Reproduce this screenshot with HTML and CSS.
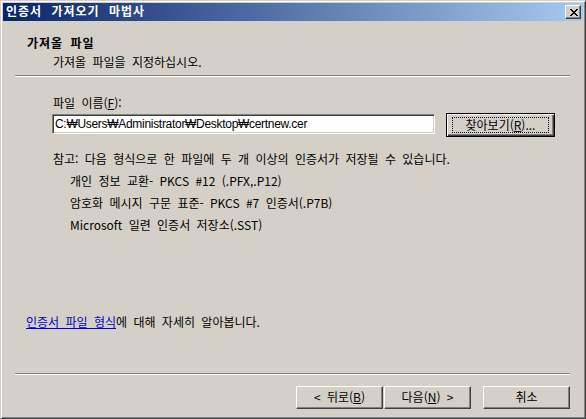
FILE: index.html
```html
<!DOCTYPE html>
<html lang="ko">
<head>
<meta charset="utf-8">
<title>인증서 가져오기 마법사</title>
<link rel="stylesheet" href="styles.css">
</head>
<body>
<div class="window">
  <div class="titlebar">
    <span class="title">인증서 가져오기 마법사</span>
    <div class="close">
      <svg width="8" height="7" viewBox="0 0 8 7" shape-rendering="crispEdges">
        <path fill="#000" d="M0 0h2v1H0zM6 0h2v1H6zM1 1h2v1H1zM5 1h2v1H5zM2 2h4v1H2zM3 3h2v1H3zM2 4h4v1H2zM1 5h2v1H1zM5 5h2v1H5zM0 6h2v1H0zM6 6h2v1H6z"/>
      </svg>
    </div>
  </div>
  <div class="page">
    <div class="header">
      <div class="h-title">가져올 파일</div>
      <div class="h-sub">가져올 파일을 지정하십시오.</div>
    </div>
    <div class="etch"></div>
    <div class="content">
      <div class="field">
        <div class="label">파일 이름(<u>F</u>):</div>
        <div class="file-row">
          <div class="input">C:₩Users₩Administrator₩Desktop₩certnew.cer</div>
          <div class="btn btn-default"><span class="focus-rect">찾아보기(<u>R</u>)...</span></div>
        </div>
        <div class="note">참고: 다음 형식으로 한 파일에 두 개 이상의 인증서가 저장될 수 있습니다.</div>
        <ul class="formats">
          <li>개인 정보 교환- PKCS #12 (.PFX,.P12)</li>
          <li>암호화 메시지 구문 표준- PKCS #7 인증서(.P7B)</li>
          <li>Microsoft 일련 인증서 저장소(.SST)</li>
        </ul>
      </div>
      <div class="more"><a class="link">인증서 파일 형식</a>에 대해 자세히 알아봅니다.</div>
    </div>
    <div class="etch"></div>
    <div class="buttons">
      <div class="btn btn-nav">&lt; 뒤로(<u>B</u>)</div>
      <div class="btn btn-nav">다음(<u>N</u>) &gt;</div>
      <div class="btn btn-nav btn-cancel">취소</div>
    </div>
  </div>
</div>
</body>
</html>
```

FILE: styles.css
```css
* { box-sizing: border-box; }

html, body {
  margin: 0;
  padding: 0;
  background: #d4d0c8;
}

body {
  font-family: "Noto Sans CJK KR", "Liberation Sans", sans-serif;
  font-size: 12px;
  line-height: 14px;
  word-spacing: 3px;
  color: #000;
}

.window {
  width: 586px;
  height: 419px;
  display: flex;
  flex-direction: column;
  background: #d4d0c8;
  border: 1px solid;
  border-color: #d4d0c8 #404040 #404040 #d4d0c8;
  box-shadow: inset 1px 1px #ffffff, inset -1px -1px #808080;
  padding: 2px;
}

.titlebar {
  height: 18px;
  flex: none;
  display: flex;
  align-items: center;
  justify-content: space-between;
  background: linear-gradient(to right, #0a246a, #a6caf0);
  padding: 0 2px 0 3px;
}

.title {
  color: #fff;
  font-weight: bold;
  letter-spacing: 1px;
  word-spacing: 5px;
  line-height: 16px;
  padding-bottom: 2px;
}

.close {
  width: 16px;
  height: 14px;
  display: flex;
  align-items: center;
  justify-content: center;
  background: #d4d0c8;
  border: 1px solid;
  border-color: #ffffff #404040 #404040 #ffffff;
  box-shadow: inset -1px -1px #808080;
  padding-left: 1px;
}

.close svg { display: block; }

.page {
  flex: 1;
  display: flex;
  flex-direction: column;
}

.header {
  padding-top: 15px;
}

.h-title {
  padding-left: 24px;
  font-weight: bold;
  letter-spacing: 1px;
}

.h-sub {
  padding-left: 50px;
  margin-top: 5px;
}

.etch {
  flex: none;
  height: 2px;
  margin: 6px 13px 0 12px;
  border-top: 1px solid #808080;
  border-bottom: 1px solid #ffffff;
}

.content {
  flex: 1;
  display: flex;
  flex-direction: column;
  padding-top: 19px;
}

.field {
  padding-left: 50px;
}

.file-row {
  display: flex;
  align-items: flex-start;
  margin-top: 3px;
}

.input {
  width: 383px;
  height: 20px;
  margin: 1px 0 0 -1px;
  background: #fff;
  border: 1px solid;
  border-color: #808080 #ffffff #ffffff #808080;
  box-shadow: inset 1px 1px #404040, inset -1px -1px #d4d0c8;
  padding: 2px 0 0 2px;
  font-family: "Liberation Sans", "DejaVu Sans", sans-serif;
  letter-spacing: -0.3px;
  line-height: 15px;
  white-space: nowrap;
  overflow: hidden;
}

.btn {
  display: flex;
  align-items: center;
  justify-content: center;
  background: #d4d0c8;
  border: 1px solid;
  border-color: #ffffff #404040 #404040 #ffffff;
  box-shadow: inset -1px -1px #808080;
  white-space: nowrap;
}

.btn-default {
  width: 109px;
  height: 24px;
  margin-left: 11px;
  border: 1px solid #000;
  box-shadow: inset 1px 1px #ffffff, inset -1px -1px #404040, inset -2px -2px #808080;
}

.focus-rect {
  width: 97px;
  height: 16px;
  display: flex;
  align-items: center;
  justify-content: center;
  border: 1px dotted #000;
  padding-bottom: 1px;
}

.note {
  margin-top: 11px;
  line-height: 22px;
}

.formats {
  list-style: none;
  margin: 0;
  padding: 0 0 0 17px;
  line-height: 22px;
}

.more {
  margin-top: auto;
  margin-bottom: 38px;
  padding-left: 23px;
}

.link {
  color: #0000cc;
  text-decoration: underline;
}

.buttons {
  flex: none;
  display: flex;
  justify-content: flex-end;
  margin: 11px 13px 7px 0;
}

.btn-nav {
  width: 87px;
  height: 23px;
  padding-bottom: 1px;
}

.btn-nav + .btn-nav {
  margin-left: 1px;
}

.btn-nav.btn-cancel {
  margin-left: 12px;
}
```
